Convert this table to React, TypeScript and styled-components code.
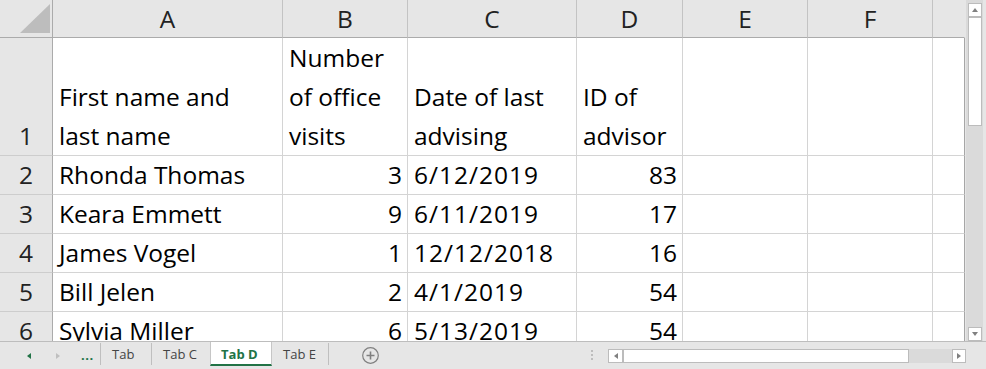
import React from "react";
import styled, { createGlobalStyle } from "styled-components";

const FONT = `"Open Sans", "Liberation Sans", Arial, sans-serif`;

const GlobalStyle = createGlobalStyle`
  html, body { margin: 0; padding: 0; background: #e6e6e6; overflow: hidden; }
  #root { width: 986px; height: 369px; }
  * { box-sizing: border-box; }
`;

const Window = styled.div`
  width: 986px;
  height: 369px;
  display: flex;
  flex-direction: column;
  background: #e6e6e6;
  font-family: ${FONT};
  overflow: hidden;
`;

const Main = styled.div`
  display: flex;
  height: 341px;
`;

const Viewport = styled.div`
  width: 965px;
  height: 341px;
  overflow: hidden;
  background: #e6e6e6;
`;

const Grid = styled.div`
  display: grid;
  grid-template-columns: 53px 230px 125px 169px 106px 125px 125px 32px;
  grid-template-rows: 38px 118px repeat(5, 39px);
`;

const Corner = styled.div`
  background: #e6e6e6;
  border-right: 1px solid #ababab;
  border-bottom: 1px solid #ababab;
  display: flex;
  justify-content: flex-end;
  align-items: flex-end;
  padding: 0 2px 4px 0;
`;

const CornerTriangle = styled.div`
  width: 30px;
  height: 29px;
  background: #bdbdbd;
  clip-path: polygon(100% 0, 100% 100%, 0 100%);
`;

const ColHeader = styled.div<{ $last?: boolean }>`
  background: #e6e6e6;
  border-right: 1px solid ${(p) => (p.$last ? "#e6e6e6" : "#c3c3c3")};
  border-bottom: 1px solid #ababab;
  text-align: center;
  font-size: 24.5px;
  line-height: 37px;
  color: #222;
`;

const RowHeader = styled.div`
  background: #e6e6e6;
  border-right: 1px solid #ababab;
  border-bottom: 1px solid #cdcdcd;
  display: flex;
  justify-content: center;
  align-items: flex-end;
  font-size: 24.5px;
  line-height: 39px;
  color: #222;
  overflow: hidden;
`;

const Cell = styled.div<{ $num?: boolean; $edge?: boolean; $spaced?: boolean }>`
  background: #fff;
  border-right: 1px solid ${(p) => (p.$edge ? "#a6a6a6" : "#d4d4d4")};
  border-bottom: 1px solid #d4d4d4;
  padding: 0 5px 0 6px;
  display: flex;
  flex-direction: column;
  justify-content: flex-end;
  align-items: ${(p) => (p.$num ? "flex-end" : "flex-start")};
  font-size: 24.5px;
  line-height: 39px;
  letter-spacing: ${(p) => (p.$spaced ? "1px" : "0")};
  color: #000;
  white-space: nowrap;
  overflow: hidden;
`;

const Line = styled.span`
  display: block;
`;

const VScroll = styled.div`
  width: 21px;
  height: 341px;
  padding: 0 3px 0 1px;
  background: #e6e6e6;
`;

const VTrack = styled.div`
  width: 17px;
  height: 100%;
  background: #dadada;
  display: flex;
  flex-direction: column;
  padding: 3px 1px 0 2px;
`;

const ScrollButton = styled.div`
  width: 14px;
  height: 14px;
  flex: none;
  background: #fff;
  border: 1px solid #bcbcbc;
  display: flex;
  align-items: center;
  justify-content: center;
`;

const VThumb = styled.div`
  width: 14px;
  height: 109px;
  background: #fff;
  border: 1px solid #bcbcbc;
  flex: none;
`;

const Spacer = styled.div`
  flex: 1;
`;

const Tri = styled.div<{ $dir: "up" | "down" | "left" | "right"; $color: string; $w: number; $h: number }>`
  width: 0;
  height: 0;
  flex: none;
  ${(p) => {
    const c = p.$color;
    switch (p.$dir) {
      case "up":
        return `border-left:${p.$w / 2}px solid transparent;border-right:${p.$w / 2}px solid transparent;border-bottom:${p.$h}px solid ${c};`;
      case "down":
        return `border-left:${p.$w / 2}px solid transparent;border-right:${p.$w / 2}px solid transparent;border-top:${p.$h}px solid ${c};`;
      case "left":
        return `border-top:${p.$h / 2}px solid transparent;border-bottom:${p.$h / 2}px solid transparent;border-right:${p.$w}px solid ${c};`;
      default:
        return `border-top:${p.$h / 2}px solid transparent;border-bottom:${p.$h / 2}px solid transparent;border-left:${p.$w}px solid ${c};`;
    }
  }}
`;

const BottomBar = styled.div`
  height: 28px;
  border-top: 1px solid #bdbdbd;
  display: flex;
  align-items: flex-start;
  background: #e6e6e6;
`;

const Nav = styled.div`
  width: 100px;
  height: 27px;
  display: flex;
  align-items: center;
  padding-left: 27px;
`;

const NavGap = styled.div<{ $w: number }>`
  width: ${(p) => p.$w}px;
  flex: none;
`;

const Ellipsis = styled.span`
  font-size: 13px;
  font-weight: 700;
  color: #217346;
  line-height: 27px;
  letter-spacing: 0.5px;
`;

const Separator = styled.div`
  width: 1px;
  height: 22px;
  margin-top: 1px;
  background: #bfbfbf;
  flex: none;
`;

const SheetTab = styled.div<{ $w: number; $active?: boolean }>`
  width: ${(p) => p.$w}px;
  height: ${(p) => (p.$active ? 24 : 26)}px;
  padding-left: ${(p) => (p.$active ? 10 : 11)}px;
  flex: none;
  font-size: 13px;
  line-height: 24px;
  color: ${(p) => (p.$active ? "#217346" : "#444")};
  font-weight: ${(p) => (p.$active ? 700 : 400)};
  background: ${(p) => (p.$active ? "#fff" : "transparent")};
  border-left: ${(p) => (p.$active ? "1px solid #c6c6c6" : "none")};
  border-right: ${(p) => (p.$active ? "1px solid #c6c6c6" : "none")};
  border-bottom: ${(p) => (p.$active ? "2px solid #217346" : "none")};
  white-space: nowrap;
`;

const AddButton = styled.div`
  margin-left: 33px;
  margin-top: 5px;
  width: 17px;
  height: 17px;
  flex: none;
  display: flex;
`;

const ScrollGroup = styled.div`
  margin-left: auto;
  width: 403px;
  height: 27px;
  display: flex;
  align-items: flex-start;
  padding-right: 20px;
`;

const Grip = styled.div`
  margin-left: 8px;
  margin-top: 8px;
  width: 2px;
  display: flex;
  flex-direction: column;
  gap: 2px;
  flex: none;
`;

const GripDot = styled.div`
  width: 2px;
  height: 2px;
  background: #bdbdbd;
`;

const HScroll = styled.div`
  margin-left: 15px;
  margin-top: 7px;
  width: 358px;
  height: 14px;
  display: flex;
  background: #dadada;
`;

const HButton = styled(ScrollButton)<{ $w: number }>`
  width: ${(p) => p.$w}px;
  height: 14px;
`;

const HThumb = styled.div`
  width: 286px;
  height: 14px;
  background: #fff;
  border: 1px solid #bcbcbc;
  flex: none;
`;

type Row = { n: string; a: string[]; b: string[]; c: string[]; d: string[]; data?: boolean };

const rows: Row[] = [
  { n: "1", a: ["First name and", "last name"], b: ["Number", "of office", "visits"], c: ["Date of last", "advising"], d: ["ID of", "advisor"] },
  { n: "2", a: ["Rhonda Thomas"], b: ["3"], c: ["6/12/2019"], d: ["83"], data: true },
  { n: "3", a: ["Keara Emmett"], b: ["9"], c: ["6/11/2019"], d: ["17"], data: true },
  { n: "4", a: ["James Vogel"], b: ["1"], c: ["12/12/2018"], d: ["16"], data: true },
  { n: "5", a: ["Bill Jelen"], b: ["2"], c: ["4/1/2019"], d: ["54"], data: true },
  { n: "6", a: ["Sylvia Miller"], b: ["6"], c: ["5/13/2019"], d: ["54"], data: true },
];

const columns = ["A", "B", "C", "D", "E", "F", ""];

const Lines: React.FC<{ lines: string[] }> = ({ lines }) => (
  <>
    {lines.map((l, i) => (
      <Line key={i}>{l}</Line>
    ))}
  </>
);

export default function App() {
  return (
    <Window>
      <GlobalStyle />
      <Main>
        <Viewport>
          <Grid>
            <Corner>
              <CornerTriangle />
            </Corner>
            {columns.map((c, i) => (
              <ColHeader key={i} $last={i === columns.length - 1}>
                {c}
              </ColHeader>
            ))}
            {rows.map((r) => (
              <React.Fragment key={r.n}>
                <RowHeader>{r.n}</RowHeader>
                <Cell>
                  <Lines lines={r.a} />
                </Cell>
                <Cell $num={r.data}>
                  <Lines lines={r.b} />
                </Cell>
                <Cell $spaced={r.data}>
                  <Lines lines={r.c} />
                </Cell>
                <Cell $num={r.data}>
                  <Lines lines={r.d} />
                </Cell>
                <Cell />
                <Cell />
                <Cell $edge />
              </React.Fragment>
            ))}
          </Grid>
        </Viewport>
        <VScroll>
          <VTrack>
            <ScrollButton>
              <Tri $dir="up" $color="#808080" $w={7} $h={4} />
            </ScrollButton>
            <VThumb />
            <Spacer />
            <ScrollButton>
              <Tri $dir="down" $color="#808080" $w={7} $h={4} />
            </ScrollButton>
          </VTrack>
        </VScroll>
      </Main>
      <BottomBar>
        <Nav>
          <Tri $dir="left" $color="#217346" $w={4} $h={7} />
          <NavGap $w={25} />
          <Tri $dir="right" $color="#bfbfbf" $w={4} $h={7} />
          <NavGap $w={21} />
          <Ellipsis>...</Ellipsis>
        </Nav>
        <Separator />
        <SheetTab $w={50}>Tab</SheetTab>
        <Separator />
        <SheetTab $w={58}>Tab C</SheetTab>
        <SheetTab $w={62} $active>
          Tab D
        </SheetTab>
        <SheetTab $w={56}>Tab E</SheetTab>
        <Separator />
        <AddButton>
          <svg width="17" height="17" viewBox="0 0 17 17">
            <circle cx="8.5" cy="8.5" r="7.8" fill="none" stroke="#808080" strokeWidth="1.2" />
            <path d="M8.5 4.5v8M4.5 8.5h8" stroke="#808080" strokeWidth="1.6" />
          </svg>
        </AddButton>
        <ScrollGroup>
          <Grip>
            <GripDot />
            <GripDot />
            <GripDot />
          </Grip>
          <HScroll>
            <HButton $w={15}>
              <Tri $dir="left" $color="#808080" $w={4} $h={7} />
            </HButton>
            <HThumb />
            <Spacer />
            <HButton $w={14}>
              <Tri $dir="right" $color="#808080" $w={4} $h={7} />
            </HButton>
          </HScroll>
        </ScrollGroup>
      </BottomBar>
    </Window>
  );
}
